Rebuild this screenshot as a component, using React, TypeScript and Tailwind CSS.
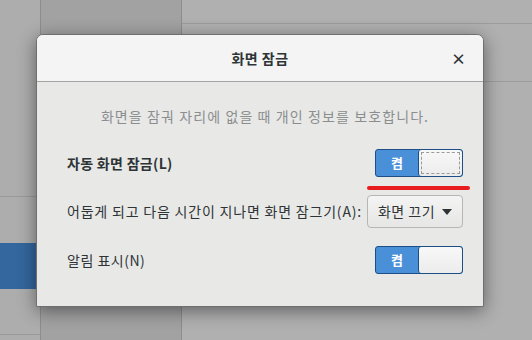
import React from 'react';

const font = { fontFamily: '"Noto Sans CJK KR", "Noto Sans", sans-serif' };

const Switch = ({ focused = false }: { focused?: boolean }) => (
  <div className="flex h-[28px] w-[88px] overflow-hidden rounded-[3px] border border-[#1d4f86] bg-[#4a90d9]">
    <div className="flex w-[42px] items-center justify-center text-[13px] font-bold text-white">켬</div>
    <div className="flex-1 rounded-[3px] border-l border-[#1d4f86] bg-gradient-to-b from-[#f8f8f8] to-[#ececec] p-[2px]">
      {focused && <div className="h-full w-full border border-dashed border-[#9a9a9a]" />}
    </div>
  </div>
);

export default function App() {
  return (
    <div className="relative h-[340px] w-[532px] overflow-hidden bg-[#a8a8a8]" style={font}>
      {/* background window */}
      <div className="flex h-full">
        <div className="flex w-[40px] flex-col bg-[#adadad]">
          <div className="h-[197px] border-b border-[#9a9a9a]" />
          <div className="h-[46px]" />
          <div className="h-[46px] bg-[#33679d]" />
          <div className="h-[46px] border-b border-[#9a9a9a]" />
        </div>
        <div className="w-[141px] border-l border-[#8d8d8d] bg-[#a2a2a2]" />
        <div className="flex-1 border-l border-[#8d8d8d] bg-[#b0b0b0]">
          <div className="h-[24px] overflow-hidden border-b border-[#9c9c9c] pl-[30px] text-[13px] leading-[16px] text-[#222]">
            <span className="-mt-[15px] block">화면 잠금 설정</span>
          </div>
          <div className="h-[58px] border-b border-[#9c9c9c]" />
        </div>
      </div>

      {/* dialog */}
      <div className="absolute left-[36px] top-[34px] flex h-[273px] w-[448px] flex-col overflow-hidden rounded-t-[7px] border border-[#6f6f6f] bg-[#e8e8e7] shadow-[0_4px_18px_rgba(0,0,0,0.45)]">
        <div className="relative flex h-[47px] items-center justify-center border-b border-[#a5a5a5] bg-[#f4f4f4]">
          <span className="text-[14px] font-bold tracking-[0.5px] text-[#2e3436]">화면 잠금</span>
          <span className="absolute right-[17px] top-[13px] text-[15px] font-bold text-[#2e3436]">×</span>
        </div>
        <div className="flex flex-col pl-[30px] pr-[20px]">
          <p className="mt-[24px] whitespace-nowrap text-center text-[14px] tracking-[1.1px] text-[#8b8e8f]">
            화면을 잠궈 자리에 없을 때 개인 정보를 보호합니다.
          </p>
          <div className="mt-[22px] flex items-center justify-between">
            <span className="text-[14px] font-bold tracking-[0.3px] text-[#2e3436]">자동 화면 잠금(L)</span>
            <Switch focused />
          </div>
          <div className="-mr-[7px] ml-auto mt-[9px] h-[4px] w-[103px] rounded-full bg-[#e81c1c]" />
          <div className="mt-[5px] flex items-center justify-between">
            <span className="whitespace-nowrap text-[14px] tracking-[0.8px] text-[#2e3436]">어둡게 되고 다음 시간이 지나면 화면 잠그기(A):</span>
            <div className="flex h-[33px] w-[96px] shrink-0 items-center justify-center gap-[7px] rounded-[4px] border border-[#b6b6b3] bg-gradient-to-b from-[#f4f4f4] to-[#e6e6e5] text-[14px] tracking-[0.5px] text-[#2e3436]">
              화면 끄기
              <svg width="10" height="6" viewBox="0 0 10 6"><path d="M0 0h10L5 6z" fill="#2e3436" /></svg>
            </div>
          </div>
          <div className="mt-[18px] flex items-center justify-between">
            <span className="text-[14px] tracking-[0.5px] text-[#2e3436]">알림 표시(N)</span>
            <Switch />
          </div>
        </div>
      </div>
    </div>
  );
}
